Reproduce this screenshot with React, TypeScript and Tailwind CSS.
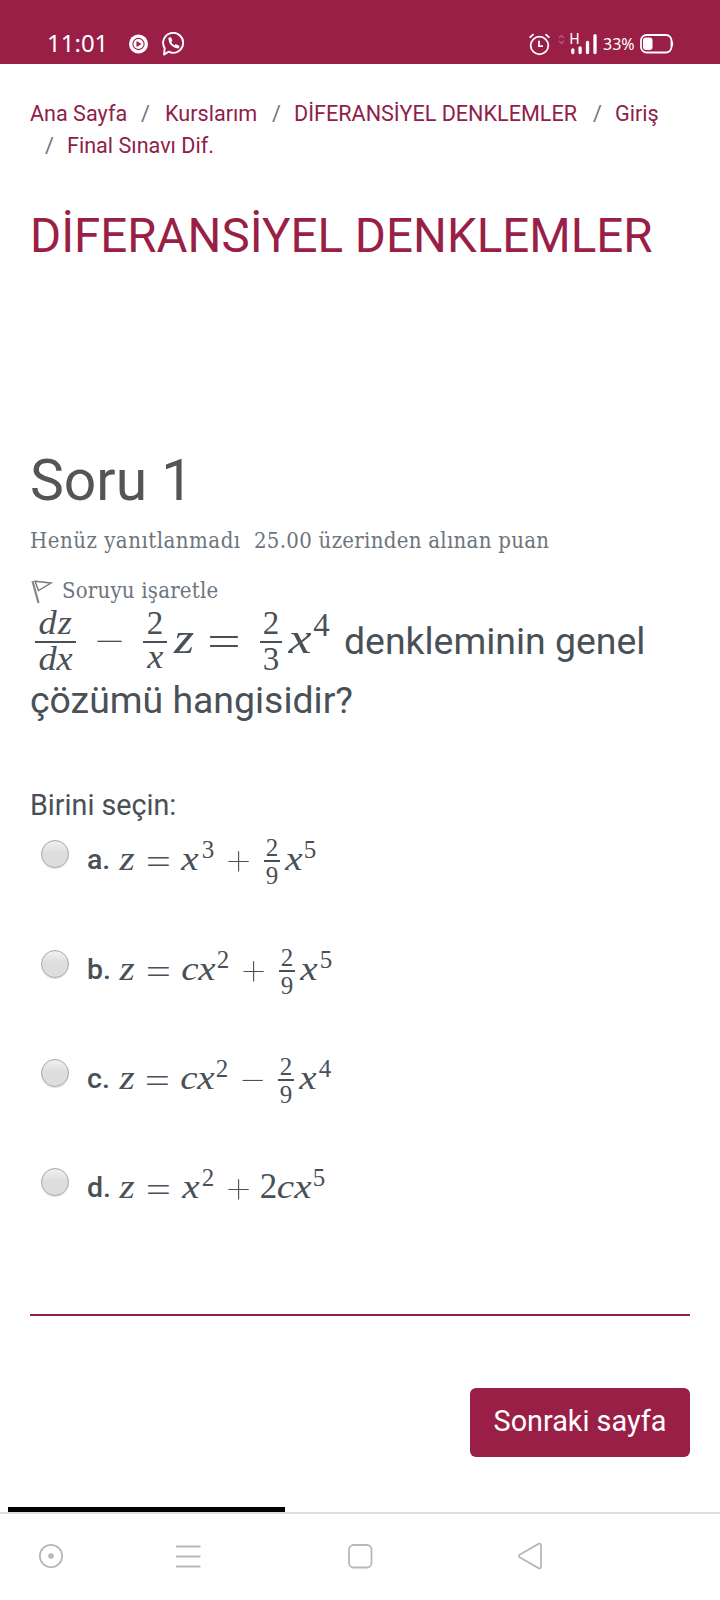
import type { ReactNode } from "react";

/* One symbol of a formula, centred in a slot. */
function S({ c, children }: { c: string; children: ReactNode }) {
  return <span className={"flex shrink-0 justify-center leading-none whitespace-pre " + c}>{children}</span>;
}

/* Main-size symbols of an answer formula. */
const V = "mt-[2px] scale-x-115 text-[34px] italic ";
const SUP = "mt-[-3px] w-[10px] text-[25px] ";
const EQ = "mt-[0px] w-[23px] scale-x-[1.5] font-['Inter'] font-extralight text-[37px] ";
const OP = "mt-[-7px] w-[23px] font-['Inter'] font-thin text-[49px] ";

function Frac({ c, top, bottom }: { c: string; top: string; bottom: string }) {
  return (
    <span className={"flex w-[16px] shrink-0 flex-col items-center " + c}>
      <span className="mt-[-5px] h-[25px] text-[25px] leading-none">{top}</span>
      <span className="h-[2px] w-full bg-[#495057]" />
      <span className="mt-[1px] h-[25px] text-[25px] leading-none">{bottom}</span>
    </span>
  );
}

function Option({ label, h, children }: { label: string; h: string; children: ReactNode }) {
  return (
    <div className={"flex items-start pl-[11px] " + h}>
      <span className="h-7 w-7 shrink-0 rounded-full border border-[#a9a9a9] bg-linear-to-b from-[#ededed] from-10% to-[#dddddd] to-45% shadow-[0_1px_1px_rgba(0,0,0,0.12)]" />
      <span className="mt-[6px] ml-[18px] w-[33px] text-[28.500px] leading-none font-medium">{label}</span>
      <span className="flex items-start font-['Liberation_Serif',serif]">{children}</span>
    </div>
  );
}

function StatusBar() {
  return (
    <header className="flex h-16 items-start bg-[#9a1f47] font-['Noto_Sans',sans-serif] text-white">
      <span className="mt-[27px] ml-[47px] w-[82px] text-[24px] leading-[32px]">11:01</span>
      <svg className="mt-[34px] h-5 w-5" viewBox="0 0 20 20">
        <circle cx="9.500" cy="10" r="9.500" fill="#fff" />
        <circle cx="9.500" cy="10" r="5.600" fill="none" stroke="#9a1f47" strokeWidth="1.100" />
        <path d="M7.500 6.900 12.500 10 7.500 13.100z" fill="#9a1f47" />
      </svg>
      <svg className="mt-[32px] ml-[13px] h-[24px] w-[24px]" viewBox="0 0 24 24" fill="none" stroke="#fff">
        <path d="M2 22.600 2.700 16.200A10 10 0 1 1 6.500 19.700z" strokeWidth="1.900" strokeLinejoin="round" />
        <path d="M7.600 7.400C7.800 11.400 11 14.700 15 15.200" strokeWidth="1.900" />
        <path d="M8 6.800 8.700 8.600M13.900 14 15.800 14.800" strokeWidth="3.200" strokeLinecap="round" />
      </svg>
      <svg className="mt-[33px] ml-[343px] h-[23px] w-[21px]" viewBox="0 0 21 23" fill="none" stroke="#fff" strokeWidth="1.800" strokeLinecap="round">
        <circle cx="10.500" cy="12.500" r="8.800" />
        <path d="M1.200 4.200 4 1.600M19.800 4.200 17 1.600M10 8.400v4.800h3.200" />
      </svg>
      <svg className="mt-[33px] ml-[9px] h-[22px] w-[40px] overflow-visible" viewBox="0 0 40 22">
        <path d="M0 5 2.500 2.500 5 5M0 8 2.500 10.500 5 8" fill="none" stroke="#b85a7c" strokeWidth="1.300" />
        <path d="M13.800 17v2.500M21.100 15v4.500M28.500 9.500v10M36 2.700v16.800" stroke="#fff" strokeWidth="3.300" strokeLinecap="round" />
        <text x="10.500" y="11" fill="#fff" fontSize="14" fontFamily="Roboto" textLength="10" lengthAdjust="spacingAndGlyphs">H</text>
      </svg>
      <span className="mt-[32px] ml-[4px] w-[37px] text-[16px] leading-[24px]">33%</span>
      <svg className="mt-[34px] h-5 w-[34px]" viewBox="0 0 34 20">
        <rect x="1" y="1" width="30.500" height="17.500" rx="5.500" fill="none" stroke="#fff" strokeWidth="1.800" />
        <rect x="3" y="3.500" width="9.500" height="12.500" rx="3" fill="#fff" />
        <path d="M32 6.500q2.500 3.300 0 6.600z" fill="#fff" />
      </svg>
    </header>
  );
}

function Breadcrumb() {
  const link = "text-[#8f2148]";
  return (
    <nav className="mt-[34px] text-[21.600px] leading-[32px] text-[#6c757d]">
      <div className="flex">
        <a className={link + " w-[111px]"}>Ana Sayfa</a>
        <span className="w-[24px]">/</span>
        <a className={link + " w-[107px]"}>Kurslarım</a>
        <span className="w-[22px]">/</span>
        <a className={link + " w-[299px] whitespace-nowrap"}>DİFERANSİYEL DENKLEMLER</a>
        <span className="w-[22px]">/</span>
        <a className={link}>Giriş</a>
      </div>
      <div className="flex pl-[15px]">
        <span className="w-[22px]">/</span>
        <a className={link}>Final Sınavı Dif.</a>
      </div>
    </nav>
  );
}

function Question() {
  const m = "mt-[4px] scale-x-115 text-[45px] italic ";
  return (
    <div className="mt-[5px]">
      <div className="flex h-[60px] items-start font-['Liberation_Serif',serif]">
        <span className="ml-[5px] flex w-[41px] shrink-0 flex-col items-center text-[33px] leading-none italic">
          <span className="mt-[-5px] h-[34px] scale-x-110 tracking-[1px]">dz</span>
          <span className="h-[2px] w-full bg-[#495057]" />
          <span className="h-[33px] scale-x-110">dx</span>
        </span>
        <S c="mt-[-5px] ml-[20px] w-[27px] font-['Inter'] font-thin text-[59px]">−</S>
        <span className="ml-[20px] flex w-[24px] shrink-0 flex-col items-center text-[33px] leading-none">
          <span className="mt-[-5px] h-[34px]">2</span>
          <span className="h-[2px] w-full bg-[#495057]" />
          <span className="mt-[-2px] h-[33px] scale-x-110 italic">x</span>
        </span>
        <S c={m + "ml-[8px] w-[18px]"}>z</S>
        <S c="mt-[2px] ml-[16px] w-[30px] scale-x-[1.55] font-['Inter'] font-extralight text-[48px]">=</S>
        <span className="ml-[21px] flex w-[22px] shrink-0 flex-col items-center text-[33px] leading-none">
          <span className="mt-[-5px] h-[34px]">2</span>
          <span className="h-[2px] w-full bg-[#495057]" />
          <span className="h-[33px]">3</span>
        </span>
        <S c={m + "ml-[7px] w-[22px]"}>x</S>
        <S c="mt-[-3px] ml-[3px] w-[15px] text-[33px]">4</S>
        <span className="mt-[11px] ml-[15px] font-['Roboto'] text-[37.400px] leading-[36px] whitespace-nowrap">denkleminin genel</span>
      </div>
      <p className="mt-[-1px] text-[37.400px] leading-[58px]">çözümü hangisidir?</p>
    </div>
  );
}

export default function App() {
  return (
    <div className="flex h-[1600px] w-[720px] flex-col overflow-hidden bg-white font-['Roboto',sans-serif] text-[#495057]">
      <StatusBar />
      <main className="px-[30px]">
        <Breadcrumb />
        <h1 className="mt-[45px] text-[47.500px] leading-[58px] whitespace-nowrap text-[#9a1f47]">DİFERANSİYEL DENKLEMLER</h1>
        <h2 className="mt-[182px] text-[57px] leading-[68px] text-[#555555]">Soru 1</h2>
        <div className="mt-[10px] flex font-['DejaVu_Serif_Condensed','DejaVu_Serif',serif] text-[22px] leading-[32px] whitespace-nowrap text-[#6c757d]">
          <span className="w-[224px] tracking-[0.500px]">Henüz yanıtlanmadı</span>
          <span className="tracking-[0.280px]">25.00 üzerinden alınan puan</span>
        </div>
        <div className="mt-[18px] flex font-['DejaVu_Serif_Condensed','DejaVu_Serif',serif] text-[22px] leading-[32px] tracking-[0.200px] text-[#6c757d]">
          <svg className="mt-[5px] h-6 w-[32px]" viewBox="0 0 32 24" fill="none" stroke="#777" strokeWidth="1.400">
            <path d="M2.500 1 8.500 23" stroke="#888" strokeWidth="2.200" />
            <path d="M5 1.200 21 3 8.500 10.500z" />
          </svg>
          <span>Soruyu işaretle</span>
        </div>
        <Question />
        <p className="mt-[55px] text-[28.700px] leading-[42px]">Birini seçin:</p>

        <div className="mt-[14px]">
          <Option label="a." h="h-[110px]">
            <S c={V + "w-[14px]"}>z</S>
            <S c={EQ + "ml-[13px]"}>=</S>
            <S c={V + "ml-[12px] w-[16px]"}>x</S>
            <S c={SUP + "ml-[5px]"}>3</S>
            <S c={OP + "ml-[14px]"}>+</S>
            <Frac c="ml-[14px]" top="2" bottom="9" />
            <S c={V + "ml-[6px] w-[16px]"}>x</S>
            <S c={SUP + "ml-[3px]"}>5</S>
          </Option>
          <Option label="b." h="h-[109px]">
            <S c={V + "w-[14px]"}>z</S>
            <S c={EQ + "ml-[13px]"}>=</S>
            <S c={V + "ml-[13px] w-[14px]"}>c</S>
            <S c={V + "ml-[2px] w-[16px]"}>x</S>
            <S c={SUP + "ml-[3px]"}>2</S>
            <S c={OP + "ml-[14px]"}>+</S>
            <Frac c="ml-[14px]" top="2" bottom="9" />
            <S c={V + "ml-[6px] w-[16px]"}>x</S>
            <S c={SUP + "ml-[4px]"}>5</S>
          </Option>
          <Option label="c." h="h-[109px]">
            <S c={V + "w-[14px]"}>z</S>
            <S c={EQ + "ml-[12px]"}>=</S>
            <S c={V + "ml-[13px] w-[14px]"}>c</S>
            <S c={V + "ml-[2px] w-[16px]"}>x</S>
            <S c={SUP + "ml-[3px]"}>2</S>
            <S c={OP + "ml-[14px]"}>−</S>
            <Frac c="ml-[14px]" top="2" bottom="9" />
            <S c={V + "ml-[6px] w-[16px]"}>x</S>
            <S c={SUP + "ml-[4px]"}>4</S>
          </Option>
          <Option label="d." h="h-[146px]">
            <S c={V + "w-[14px]"}>z</S>
            <S c={EQ + "ml-[13px]"}>=</S>
            <S c={V + "ml-[13px] w-[16px]"}>x</S>
            <S c={SUP + "ml-[4px]"}>2</S>
            <S c={OP + "ml-[14px]"}>+</S>
            <S c="mt-[1px] ml-[11px] w-[15px] text-[35px]">2</S>
            <S c={V + "ml-[3px] w-[13px]"}>c</S>
            <S c={V + "ml-[3px] w-[16px]"}>x</S>
            <S c={SUP + "ml-[3px]"}>5</S>
          </Option>
        </div>

        <hr className="border-t-2 border-[#8f2148]" />
        <div className="mt-[72px] flex justify-end">
          <button className="h-[69px] w-[220px] rounded-[6px] bg-[#9a1f47] pb-[2px] text-[28.800px] whitespace-nowrap text-white">Sonraki sayfa</button>
        </div>
      </main>
      <div className="mt-[50px] ml-2 h-[5px] w-[277px] shrink-0 bg-black" />
      <footer className="flex h-[88px] shrink-0 items-start border-t-2 border-[#dedede] pt-[28px]">
        <svg className="ml-[37px] h-7 w-7" viewBox="0 0 28 28">
          <circle cx="14" cy="14" r="11.200" fill="none" stroke="#b8b8b8" strokeWidth="1.800" />
          <circle cx="14" cy="14" r="2.800" fill="#b8b8b8" />
        </svg>
        <svg className="ml-[109px] h-7 w-[28px]" viewBox="0 0 28 28" stroke="#b8b8b8" strokeWidth="2">
          <path d="M2 4.500h24.500M2 14.500h24.500M2 24.500h24.500" />
        </svg>
        <svg className="ml-[144px] h-7 w-7" viewBox="0 0 28 28" fill="none" stroke="#b8b8b8" strokeWidth="1.800">
          <rect x="3" y="3" width="22.500" height="22.500" rx="4.500" />
        </svg>
        <svg className="ml-[142px] h-7 w-[30px]" viewBox="0 0 30 28" fill="none" stroke="#b8b8b8" strokeWidth="1.800" strokeLinejoin="round">
          <path d="M4 12.500 22.500 1.900Q25 1 25 3.500V24.500Q25 27 22.500 26.100L4 15.500Q2 14 4 12.500z" />
        </svg>
      </footer>
    </div>
  );
}
